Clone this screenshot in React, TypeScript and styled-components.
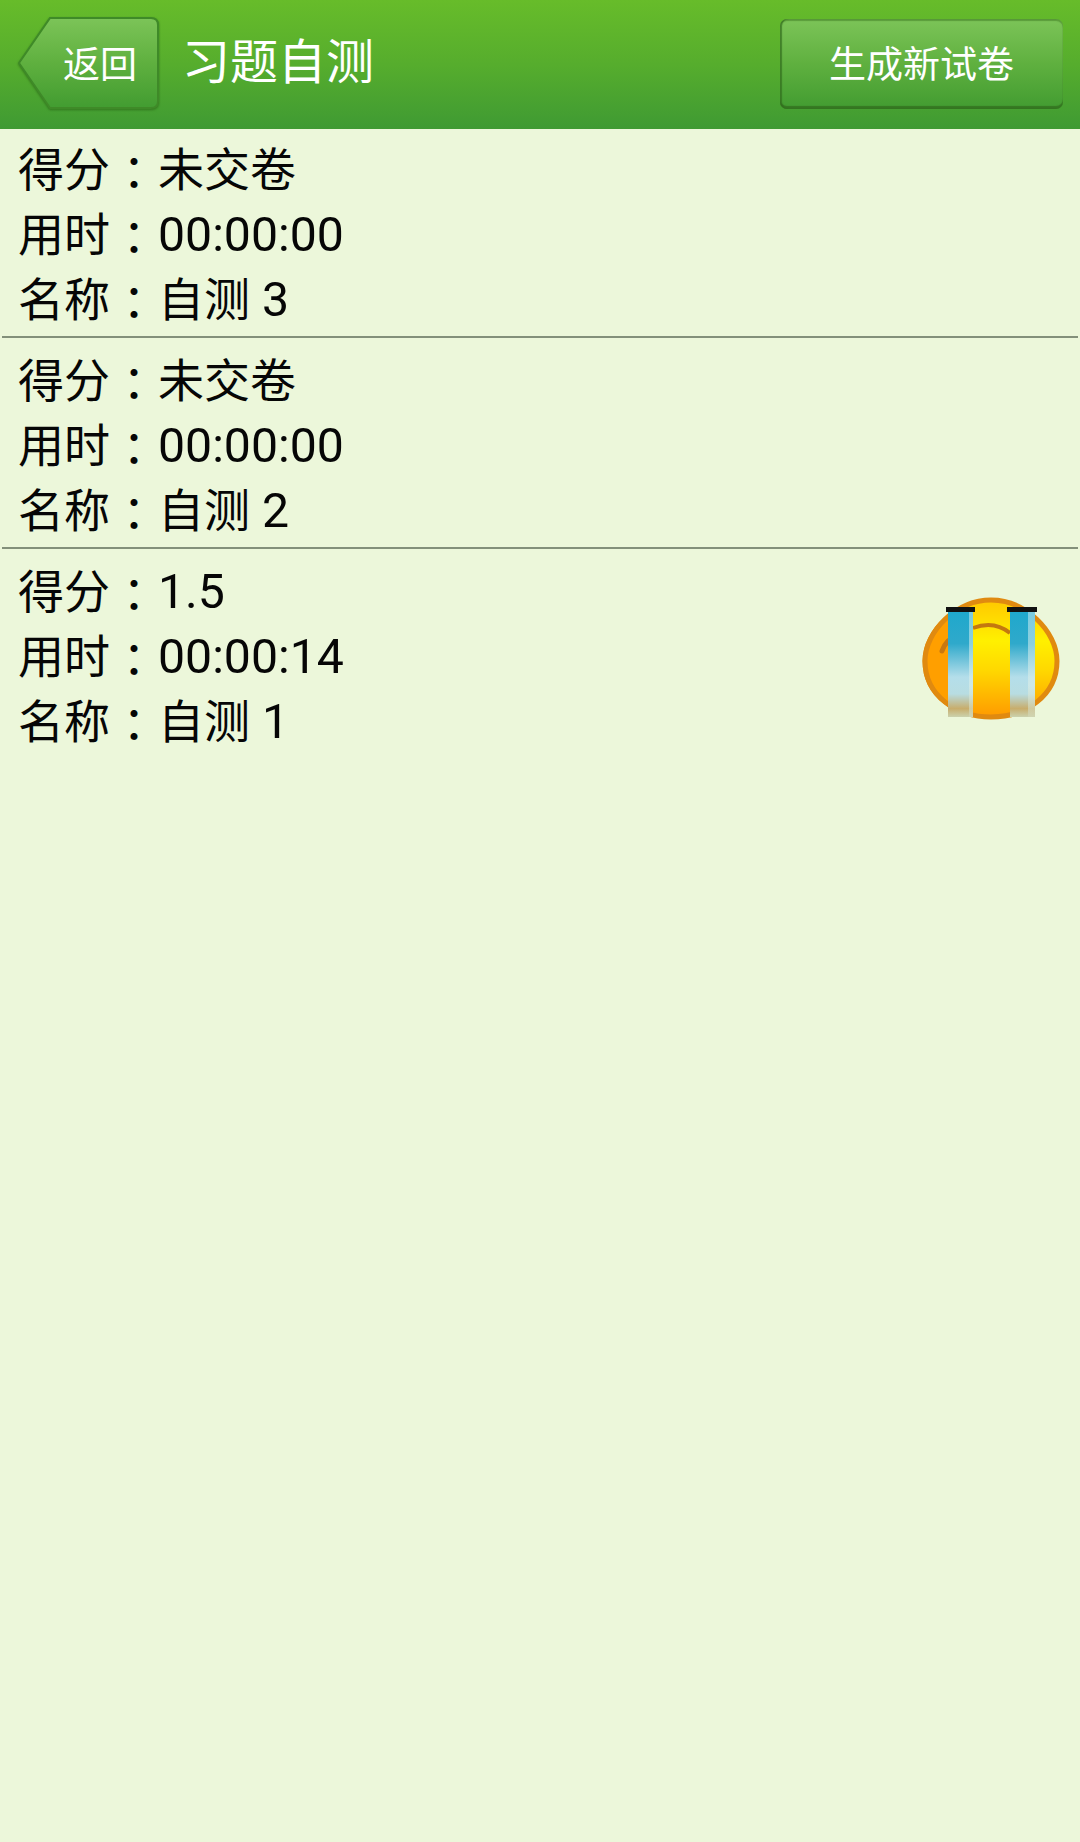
import React from 'react';
import styled, { createGlobalStyle } from 'styled-components';

const GlobalStyle = createGlobalStyle`
    html, body {
        margin: 0;
        padding: 0;
        background: #ecf7da;
    }
    body {
        font-family: Roboto, "Noto Sans CJK SC", sans-serif;
    }
`;

const Page = styled.div`
    width: 1080px;
    height: 1842px;
    overflow: hidden;
    background: #ecf7da;
`;

const Header = styled.header`
    height: 129px;
    display: flex;
    align-items: center;
    padding: 0 18px;
    box-sizing: border-box;
    background: linear-gradient(180deg, #67bc2a 0%, #56ad2d 50%, #3f9a33 100%);
`;

const BackButton = styled.div`
    position: relative;
    width: 142px;
    height: 92px;
    margin-top: -3px;
    flex: none;
    display: flex;
    align-items: center;
    color: #fff;
    font-size: 37px;
    padding-left: 45px;
    box-sizing: border-box;
`;

const BackShape = styled.svg`
    position: absolute;
    left: 0;
    top: 0;
    filter: drop-shadow(0 1px 1px rgba(40, 100, 20, 0.7));
`;

const BackLabel = styled.span`
    position: relative;
    top: -1px;
`;

const Title = styled.h1`
    margin: 0 0 0 22px;
    font-size: 48px;
    font-weight: 400;
    color: #fff;
    flex: 1;
    line-height: 1;
    position: relative;
    top: -2px;
`;

const ActionButton = styled.div`
    width: 283px;
    height: 90px;
    margin-top: -2px;
    margin-right: -1px;
    flex: none;
    display: flex;
    align-items: center;
    justify-content: center;
    box-sizing: border-box;
    color: #fff;
    font-size: 37px;
    padding-bottom: 3px;
    border-radius: 7px;
    box-shadow:
        inset 2px 0 1px rgba(50, 110, 30, 0.7),
        inset 0 2px 1px rgba(70, 130, 40, 0.6),
        inset 0 -3px 1px rgba(50, 110, 30, 0.8);
    background: linear-gradient(180deg, #7cc458 0%, #5fb03f 50%, #429c31 100%);
`;

const List = styled.div`
    display: flex;
    flex-direction: column;
`;

const Row = styled.div<{ $divider?: boolean; $tall?: boolean }>`
    height: ${(p) => (p.$tall ? '211px' : '209px')};
    box-sizing: border-box;
    padding: ${(p) => (p.$tall ? '7px' : '5px')} 0 0 16px;
    margin: 0 2px;
    display: flex;
    justify-content: space-between;
    border-bottom: ${(p) => (p.$divider ? '2px solid #83907a' : 'none')};
`;

const Lines = styled.div`
    display: flex;
    flex-direction: column;
`;

const Line = styled.div`
    height: 65px;
    line-height: 65px;
    font-size: 46px;
    color: #060606;
    white-space: nowrap;
`;

const Colon = styled.span`
    display: inline-block;
    width: 48px;
    text-align: center;
    font-family: "Noto Sans CJK TC", sans-serif;
    position: relative;
    top: 4px;
`;

const Num = styled.span`
    font-size: 48.2px;
`;

const FaceSlot = styled.div`
    width: 142px;
    height: 125px;
    margin: 40px 16px 0 0;
    flex: none;
`;

const Face = () => (
    <svg width="142" height="125" viewBox="0 0 142 125">
        <defs>
            <linearGradient id="skin" x1="0" y1="0" x2="0" y2="1">
                <stop offset="0%" stopColor="#ffc800" />
                <stop offset="35%" stopColor="#fff000" />
                <stop offset="60%" stopColor="#ffd800" />
                <stop offset="100%" stopColor="#ff9a00" />
            </linearGradient>
            <linearGradient id="tear" x1="0" y1="0" x2="0" y2="1">
                <stop offset="0%" stopColor="#1fa8cc" />
                <stop offset="30%" stopColor="#2fa9cb" />
                <stop offset="62%" stopColor="#b4deea" />
                <stop offset="78%" stopColor="#b8dde2" />
                <stop offset="92%" stopColor="#c8ad6c" />
                <stop offset="100%" stopColor="#cbd2ad" />
            </linearGradient>
            <linearGradient id="shine" x1="0" y1="0" x2="0" y2="1">
                <stop offset="0%" stopColor="#b8e4ee" />
                <stop offset="70%" stopColor="#dceee8" />
                <stop offset="100%" stopColor="#d2d6b4" />
            </linearGradient>
            <clipPath id="leftSide">
                <rect x="0" y="0" width="28" height="125" />
            </clipPath>
        </defs>
        <path
            d="M71 4 C105 4 137 35 137 65 C137 100 105 121 71 121 C37 121 5 100 5 65 C5 35 37 4 71 4 Z"
            fill="url(#skin)"
            stroke="#e08a10"
            strokeWidth="5"
        />
        <path
            d="M71 4 C37 4 5 35 5 65 C5 100 37 121 71 121 Z"
            fill="#ff9f00"
            stroke="#e08a10"
            strokeWidth="5"
            clipPath="url(#leftSide)"
        />
        <path d="M22 55 Q24 49 28 45" fill="none" stroke="#c9780f" strokeWidth="5" strokeLinecap="round" />
        <path d="M53 32 Q74 24 90 37" fill="none" stroke="#c4780f" strokeWidth="4" />
        <rect x="28" y="16" width="25" height="105" fill="url(#tear)" />
        <rect x="49" y="16" width="4" height="105" fill="url(#shine)" opacity="0.6" />
        <rect x="90" y="16" width="25" height="105" fill="url(#tear)" />
        <rect x="108" y="16" width="7" height="105" fill="url(#shine)" opacity="0.6" />
        <rect x="26" y="11" width="29" height="5" fill="#111" />
        <rect x="87" y="11" width="30" height="5" fill="#111" />
    </svg>
);

const records = [
    { score: '未交卷', time: '00:00:00', name: '自测', index: '3' },
    { score: '未交卷', time: '00:00:00', name: '自测', index: '2' },
    { score: '1.5', time: '00:00:14', name: '自测', index: '1', failed: true },
];

const App: React.FC = () => {
    return <Page>
        <GlobalStyle />
        <Header>
            <BackButton>
                <BackShape width="142" height="92" viewBox="0 0 142 92">
                    <defs>
                        <linearGradient id="back" x1="0" y1="0" x2="0" y2="1">
                            <stop offset="0%" stopColor="#7cc458" />
                            <stop offset="50%" stopColor="#5fb03f" />
                            <stop offset="100%" stopColor="#429c31" />
                        </linearGradient>
                    </defs>
                    <path
                        d="M32 1 H133 Q140 1 140 8 V84 Q140 91 133 91 H32 L1 46 Z"
                        fill="url(#back)"
                        stroke="#3f8a28"
                        strokeWidth="2"
                    />
                </BackShape>
                <BackLabel>返回</BackLabel>
            </BackButton>
            <Title>习题自测</Title>
            <ActionButton>生成新试卷</ActionButton>
        </Header>
        <List>
            {records.map((r, i) => (
                <Row key={r.index} $divider={i < records.length - 1} $tall={i > 0}>
                    <Lines>
                        <Line>得分<Colon>：</Colon>{r.failed ? <Num>{r.score}</Num> : r.score}</Line>
                        <Line>用时<Colon>：</Colon><Num>{r.time}</Num></Line>
                        <Line>名称<Colon>：</Colon>{r.name}<Num> {r.index}</Num></Line>
                    </Lines>
                    {r.failed && <FaceSlot><Face /></FaceSlot>}
                </Row>
            ))}
        </List>
    </Page>
}

export default App;
